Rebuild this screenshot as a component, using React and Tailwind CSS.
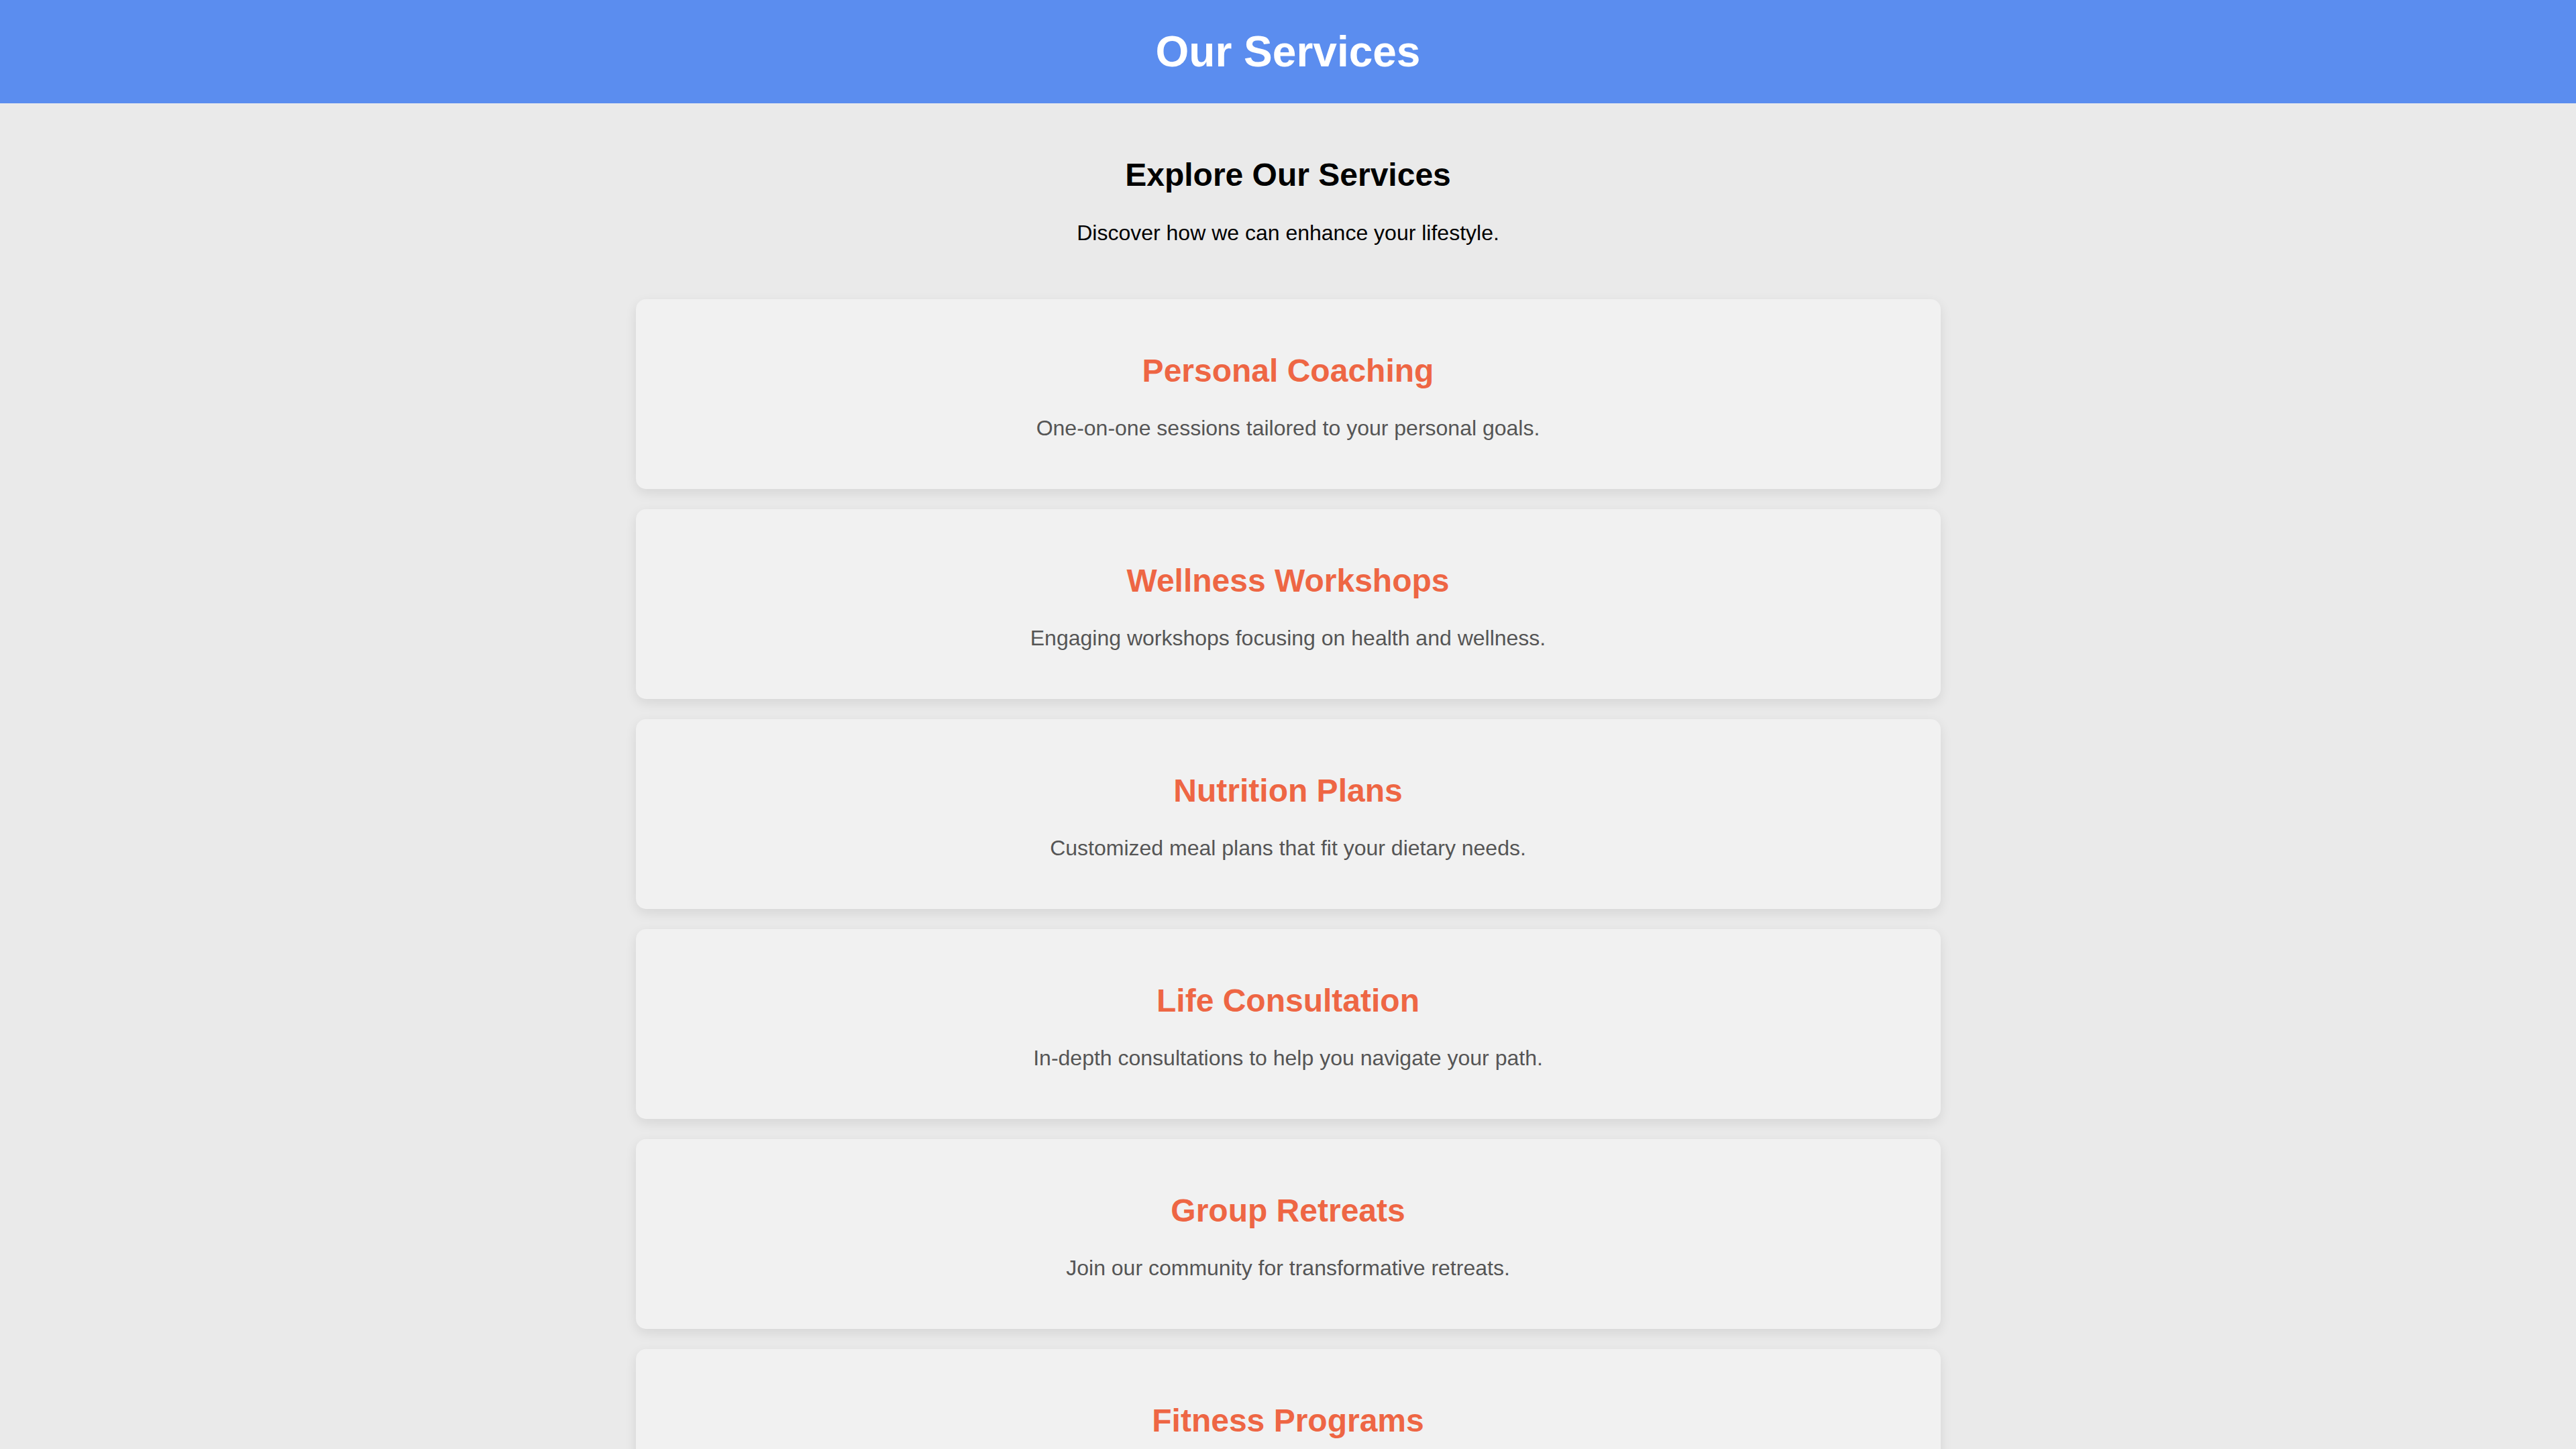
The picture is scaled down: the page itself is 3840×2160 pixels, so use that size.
const services = [
  { title: "Personal Coaching", text: "One-on-one sessions tailored to your personal goals." },
  { title: "Wellness Workshops", text: "Engaging workshops focusing on health and wellness." },
  { title: "Nutrition Plans", text: "Customized meal plans that fit your dietary needs." },
  { title: "Life Consultation", text: "In-depth consultations to help you navigate your path." },
  { title: "Group Retreats", text: "Join our community for transformative retreats." },
  { title: "Fitness Programs", text: "Structured programs to help you reach your fitness goals." },
];

export default function App() {
  return (
    <div className="min-h-screen bg-[#eaeaea] font-['Liberation_Sans',Arial,sans-serif]">
      {/* Header */}
      <header className="h-[154px] bg-[#5b8def] flex items-center justify-center">
        <h1 className="text-[64px] leading-none font-bold text-white">Our Services</h1>
      </header>

      <main className="pt-[79px] pb-20">
        <div className="text-center">
          <h2 className="text-[48px] leading-[55px] font-bold text-black">Explore Our Services</h2>
          <p className="mt-[41px] text-[32px] leading-[37px] text-black">
            Discover how we can enhance your lifestyle.
          </p>
        </div>

        <div className="w-[1945px] mx-auto mt-[80px] flex flex-col gap-[30px]">
          {services.map((s, i) => (
            <div
              key={i}
              className="bg-[#f1f1f1] rounded-[15px] shadow-[0_6px_18px_rgba(0,0,0,0.09)] text-center pt-[79px] pb-[72px]"
            >
              <h3 className="text-[48px] leading-[55px] font-bold text-[#ee6644]">{s.title}</h3>
              <p className="mt-[40px] text-[32px] leading-[37px] text-[#555555]">{s.text}</p>
            </div>
          ))}
        </div>
      </main>
    </div>
  );
}
